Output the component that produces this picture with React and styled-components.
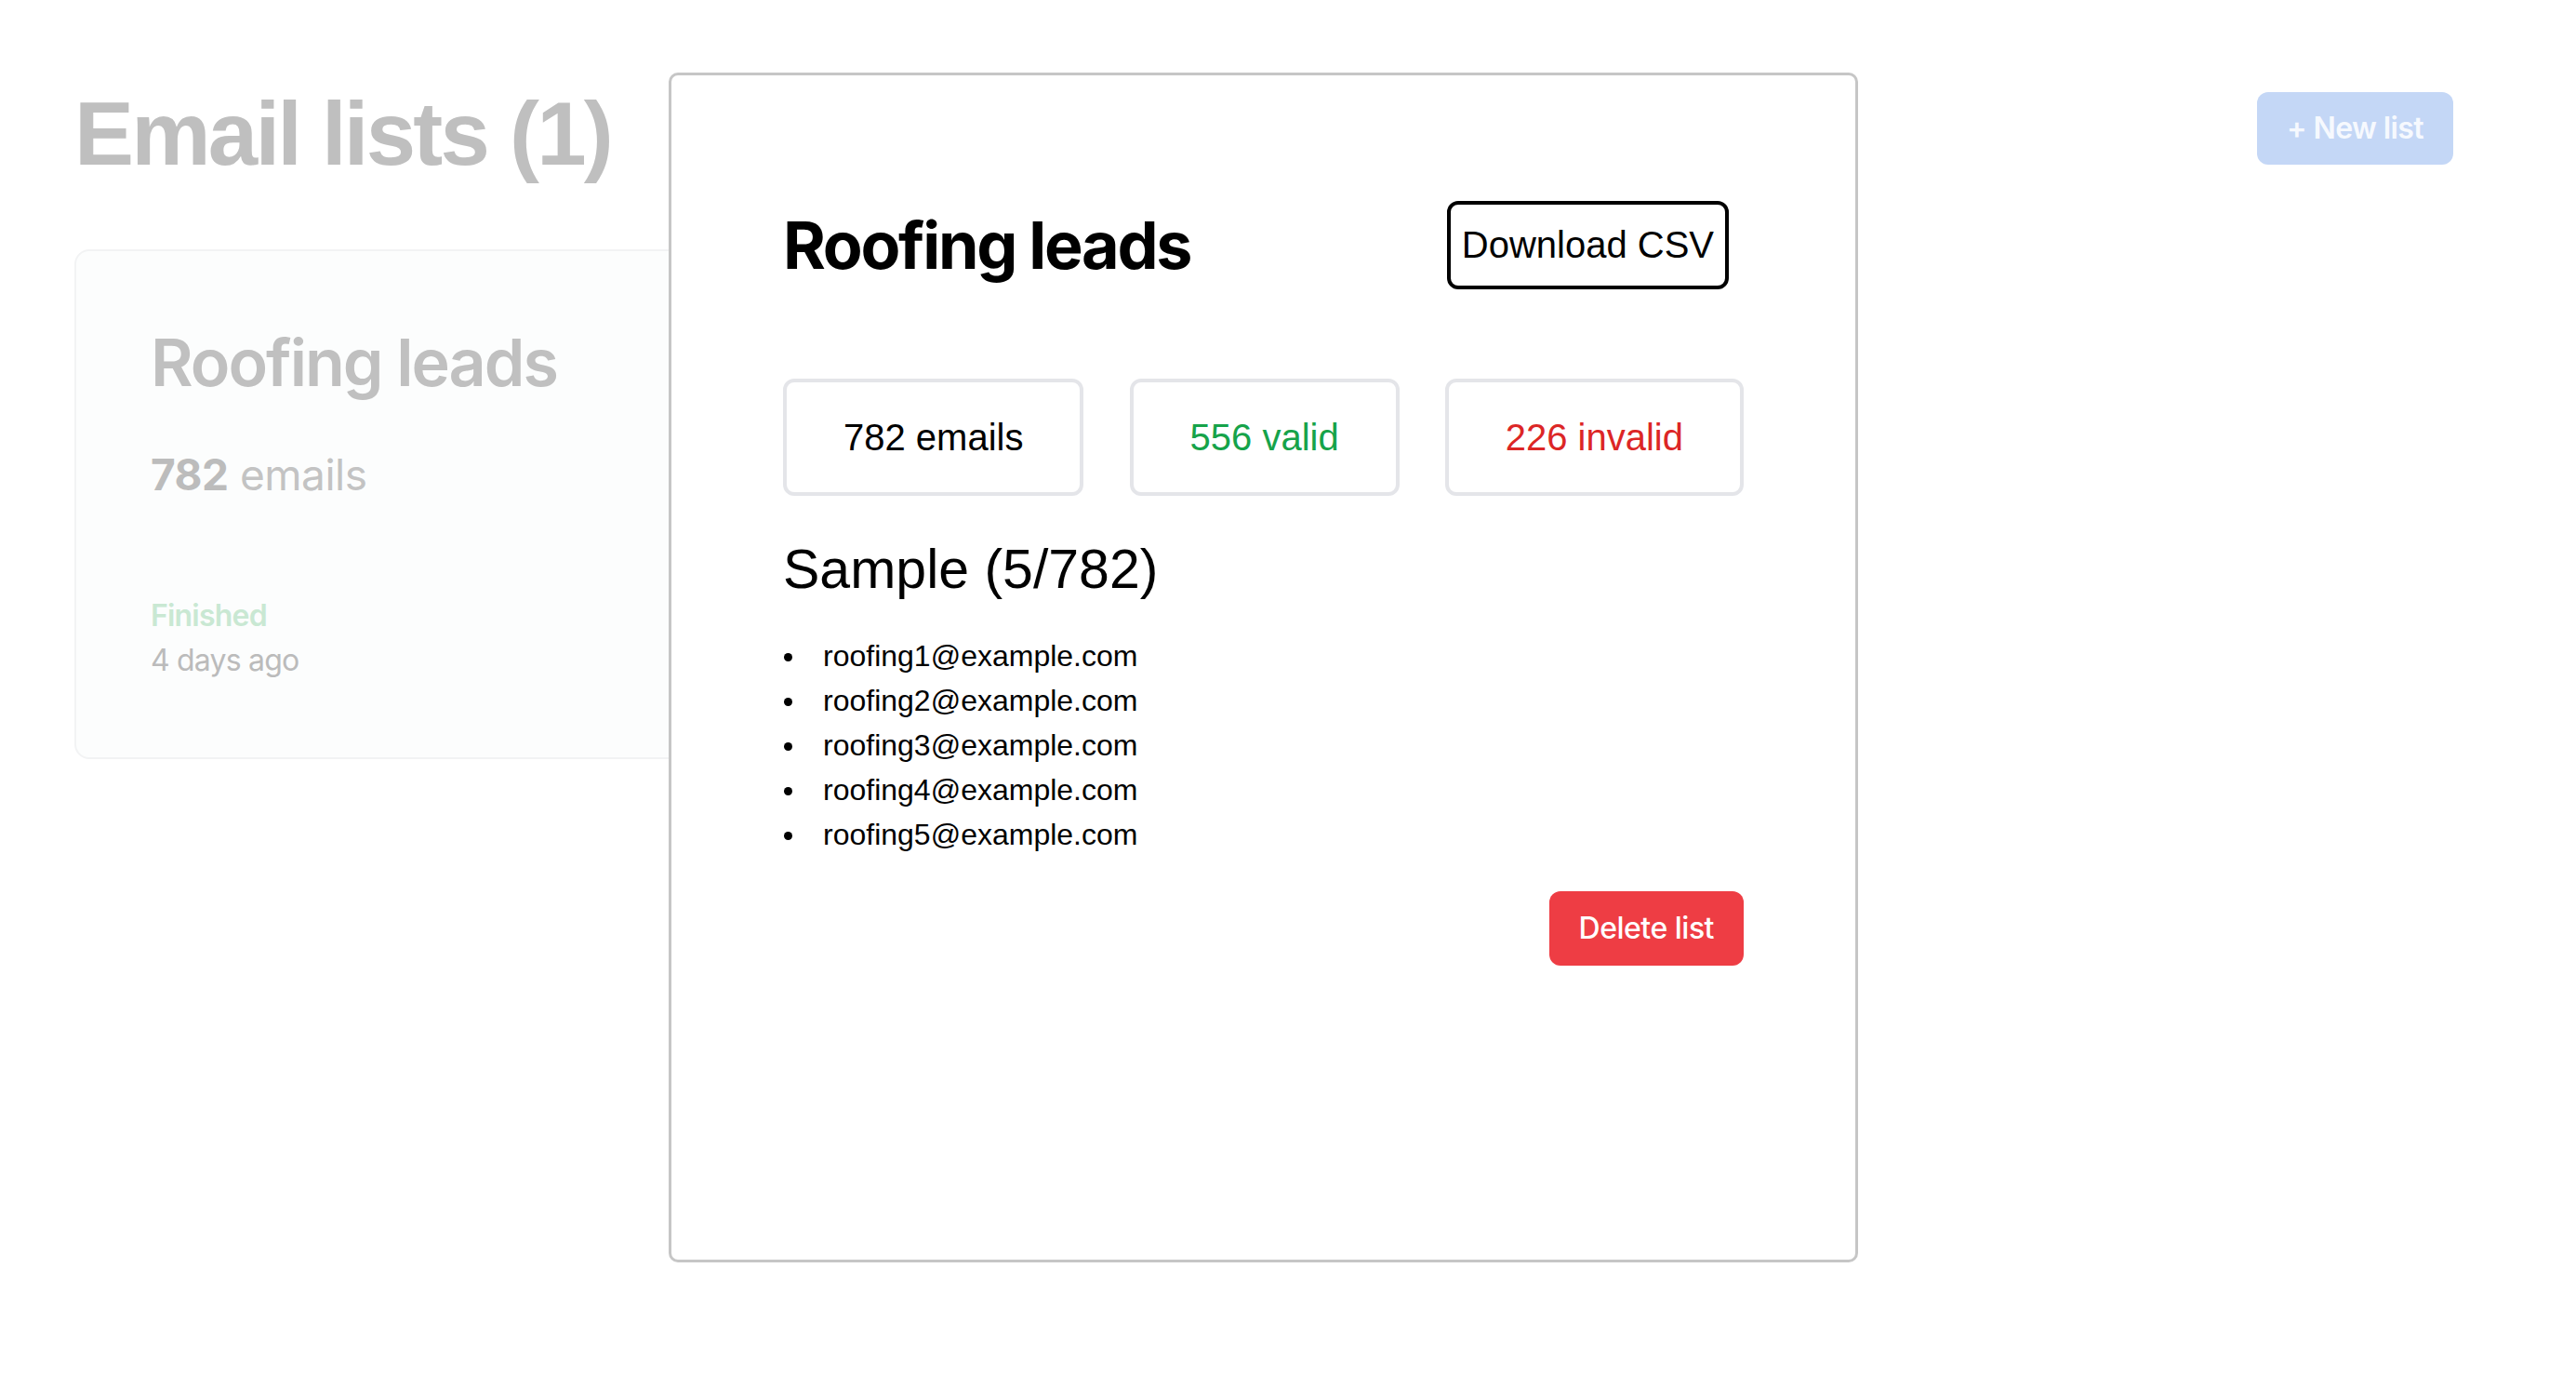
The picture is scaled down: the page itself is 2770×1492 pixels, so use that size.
import React from "react";
import styled, { createGlobalStyle } from "styled-components";

const GlobalStyle = createGlobalStyle`
  html, body { margin: 0; padding: 0; background: #ffffff; }
  body {
    font-family: "Liberation Sans", Arial, sans-serif;
    color: #000;
    width: 2770px;
    height: 1492px;
    overflow: hidden;
  }
  * { box-sizing: border-box; }
`;

const Page = styled.div`
  position: relative;
  width: 2770px;
  height: 1492px;
`;

const Header = styled.header`
  display: flex;
  justify-content: space-between;
  align-items: flex-start;
  padding: 96px 132px 0 80px;
`;

const Title = styled.h1`
  margin: 0;
  font-family: "Liberation Sans", Arial, sans-serif;
  font-weight: 700;
  font-size: 96px;
  line-height: 96px;
  letter-spacing: -2.8px;
  color: #bfbfbf;
`;

const NewListButton = styled.button`
  margin-top: 3px;
  border: none;
  border-radius: 12px;
  background: #c4d7f6;
  color: #f6f9fe;
  font-family: Inter, "Noto Sans", sans-serif;
  font-weight: 600;
  font-size: 32px;
  line-height: 48px;
  letter-spacing: -0.6px;
  padding: 15px 32px;
`;

const Grid = styled.section`
  display: flex;
  padding: 76px 80px 0;
`;

const ListCard = styled.article`
  width: 800px;
  background: #fcfdfd;
  border: 2px solid #f2f3f4;
  border-radius: 16px;
  padding: 80px;
  font-family: Inter, "Noto Sans", sans-serif;
`;

const CardTitle = styled.h2`
  margin: 0;
  font-size: 70px;
  line-height: 80px;
  font-weight: 600;
  letter-spacing: -2px;
  color: #c0c0c0;
`;

const CardCount = styled.p`
  margin: 48px 0 0;
  font-size: 46px;
  line-height: 64px;
  letter-spacing: -0.5px;
  color: #c3c3c3;
  b { font-weight: 700; color: #bcbcbc; }
`;

const Status = styled.p`
  margin: 96px 0 0;
  font-size: 32px;
  line-height: 48px;
  font-weight: 600;
  letter-spacing: -0.8px;
  color: #c9e8d3;
`;

const Meta = styled.p`
  margin: 0;
  font-size: 32px;
  line-height: 48px;
  letter-spacing: -0.8px;
  color: #bbbbbb;
`;

const Modal = styled.div`
  position: absolute;
  left: 719px;
  top: 78px;
  width: 1279px;
  height: 1279px;
  background: #ffffff;
  border: 3px solid #c6c6c6;
  border-radius: 10px;
  padding: 135px 120px;
`;

const ModalHeader = styled.div`
  display: flex;
  justify-content: space-between;
  align-items: center;
  padding-right: 16px;
`;

const ModalTitle = styled.h2`
  margin: 0;
  font-family: Inter, "Noto Sans", sans-serif;
  font-size: 70px;
  line-height: 80px;
  font-weight: 700;
  letter-spacing: -2.3px;
  color: #000;
`;

const OutlineButton = styled.button`
  border: 4px solid #000;
  border-radius: 12px;
  background: #fff;
  color: #000;
  font-family: "Liberation Sans", Arial, sans-serif;
  font-size: 40px;
  line-height: 55px;
  padding: 16px 12px;
`;

const Stats = styled.div`
  display: flex;
  justify-content: space-between;
  margin-top: 96px;
`;

const StatBox = styled.div`
  border: 4px solid #e4e5e9;
  border-radius: 12px;
  padding: 31px 61px;
  font-size: 40px;
  line-height: 56px;
  color: ${(p) => p.$color || "#000"};
`;

const SampleTitle = styled.h3`
  margin: 43px 0 0;
  font-weight: 400;
  font-size: 59px;
  line-height: 72px;
`;

const SampleList = styled.ul`
  margin: 33px 0 0;
  padding: 0;
  list-style: none;
`;

const SampleItem = styled.li`
  display: flex;
  align-items: flex-start;
  font-size: 32px;
  line-height: 48px;

  &::before {
    content: "";
    flex: none;
    width: 9px;
    height: 9px;
    margin: 21px 33px 0 1px;
    border-radius: 50%;
    background: #000;
  }
`;

const Actions = styled.div`
  display: flex;
  justify-content: flex-end;
  margin-top: 37px;
`;

const DangerButton = styled.button`
  border: none;
  border-radius: 12px;
  background: #ee3d44;
  color: #fff;
  font-family: Inter, "Noto Sans", sans-serif;
  font-weight: 500;
  font-size: 32px;
  line-height: 48px;
  letter-spacing: -0.5px;
  padding: 16px 32px;
`;

const emails = [1, 2, 3, 4, 5].map((n) => `roofing${n}@example.com`);

export default function App() {
  return (
    <Page>
      <GlobalStyle />
      <Header>
        <Title>Email lists (1)</Title>
        <NewListButton>+ New list</NewListButton>
      </Header>
      <Grid>
        <ListCard>
          <CardTitle>Roofing leads</CardTitle>
          <CardCount>
            <b>782</b> emails
          </CardCount>
          <Status>Finished</Status>
          <Meta>4 days ago</Meta>
        </ListCard>
      </Grid>
      <Modal>
        <ModalHeader>
          <ModalTitle>Roofing leads</ModalTitle>
          <OutlineButton>Download CSV</OutlineButton>
        </ModalHeader>
        <Stats>
          <StatBox>782 emails</StatBox>
          <StatBox $color="#16a34a">556 valid</StatBox>
          <StatBox $color="#dc2626">226 invalid</StatBox>
        </Stats>
        <SampleTitle>Sample (5/782)</SampleTitle>
        <SampleList>
          {emails.map((e) => (
            <SampleItem key={e}>{e}</SampleItem>
          ))}
        </SampleList>
        <Actions>
          <DangerButton>Delete list</DangerButton>
        </Actions>
      </Modal>
    </Page>
  );
}
